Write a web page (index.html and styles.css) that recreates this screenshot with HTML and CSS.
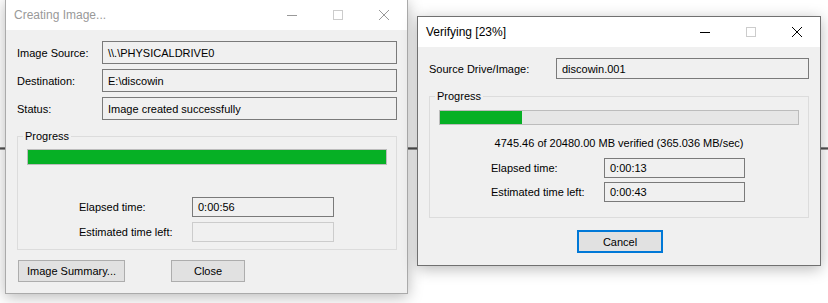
FILE: index.html
```html
<!DOCTYPE html>
<html>
	<head>
		<meta charset="UTF-8">
		<title>Creating Image</title>
		<link rel="stylesheet" href="styles.css">
	</head>
	<body>
		<!--创建镜像窗口(非活动)-->
		<div class="window inactive win-create">
			<div class="titlebar">
				<span class="title">Creating Image...</span>
				<div class="caption">
					<span class="cap"><svg width="10" height="10"><path d="M0 5.5h10"/></svg></span>
					<span class="cap cap-off"><svg width="10" height="10"><rect x="0.5" y="0.5" width="9" height="9"/></svg></span>
					<span class="cap"><svg width="10" height="10"><path d="M0 0L10 10M10 0L0 10"/></svg></span>
				</div>
			</div>
			<div class="client">
				<div class="fields fields-create">
					<label>Image Source:</label><div class="box">\\.\PHYSICALDRIVE0</div>
					<label>Destination:</label><div class="box">E:\discowin</div>
					<label>Status:</label><div class="box">Image created successfully</div>
				</div>
				<fieldset class="group group-create">
					<legend>Progress</legend>
					<div class="bar bar-create"><div class="bar-fill" style="width:100%"></div></div>
					<div class="times times-create">
						<label>Elapsed time:</label><div class="box">0:00:56</div>
						<label>Estimated time left:</label><div class="box box-off"></div>
					</div>
				</fieldset>
				<div class="buttons">
					<button class="btn btn-summary">Image Summary...</button>
					<button class="btn btn-close">Close</button>
				</div>
			</div>
		</div>

		<!--校验窗口(活动)-->
		<div class="window active win-verify">
			<div class="titlebar">
				<span class="title">Verifying [23%]</span>
				<div class="caption">
					<span class="cap"><svg width="10" height="10"><path d="M0 5.5h10"/></svg></span>
					<span class="cap cap-off"><svg width="10" height="10"><rect x="0.5" y="0.5" width="9" height="9"/></svg></span>
					<span class="cap"><svg width="10" height="10"><path d="M0 0L10 10M10 0L0 10"/></svg></span>
				</div>
			</div>
			<div class="client">
				<div class="fields fields-verify">
					<label>Source Drive/Image:</label><div class="box">discowin.001</div>
				</div>
				<fieldset class="group group-verify">
					<legend>Progress</legend>
					<div class="bar bar-verify"><div class="bar-fill" style="width:23%"></div></div>
					<div class="rate">4745.46 of 20480.00 MB verified (365.036 MB/sec)</div>
					<div class="times times-verify">
						<label>Elapsed time:</label><div class="box">0:00:13</div>
						<label>Estimated time left:</label><div class="box">0:00:43</div>
					</div>
				</fieldset>
				<div class="buttons buttons-center">
					<button class="btn btn-cancel">Cancel</button>
				</div>
			</div>
		</div>
	</body>
</html>
```
FILE: styles.css
```css
*{
	margin: 0;
	padding: 0;
	box-sizing: border-box;
}
html, body{
	width: 828px;
	height: 303px;
	overflow: hidden;
}
body{
	position: relative;
	font-family: "Liberation Sans", Arial, sans-serif;
	font-size: 11px;
	color: #000;
	/*背后桌面上的一条横线*/
	background: linear-gradient(transparent 147px, #8c8c8c 147px, #8c8c8c 148px, #505050 148px, #505050 149px, #9a9a9a 149px, #9a9a9a 150px, transparent 150px), #fff;
}

/*窗口*/
.window{
	position: absolute;
	background-color: #f0f0f0;
	box-shadow: 0 3px 14px rgba(0, 0, 0, 0.28);
	display: flex;
	flex-direction: column;
}
.inactive{
	border: 1px solid #aaaaaa;
}
.active{
	border: 1px solid #707070;
}
.win-create{
	left: 5px;
	top: -1px;
	width: 403px;
	height: 295px;
}
.win-verify{
	left: 417px;
	top: 16px;
	width: 404px;
	height: 250px;
}

/*标题栏*/
.titlebar{
	height: 30px;
	flex: none;
	background-color: #fff;
	display: flex;
	align-items: center;
}
.title{
	flex: 1;
	padding-left: 8px;
	font-size: 12px;
}
.inactive .title{
	color: #999;
}
.caption{
	display: flex;
	height: 30px;
}
.cap{
	width: 46px;
	height: 30px;
	display: flex;
	align-items: center;
	justify-content: center;
}
.cap svg{
	fill: none;
	stroke: #000;
	stroke-width: 1;
}
.inactive .cap svg{
	stroke: #999;
}
.cap-off svg, .inactive .cap-off svg{
	stroke: #cccccc;
}

/*内容区*/
.win-create .client{
	padding: 11px 10px 0 11px;
}
.win-verify .client{
	padding: 11px 11px 0 11px;
}
.fields{
	display: grid;
	align-items: center;
}
.fields-create{
	grid-template-columns: 85px 1fr;
	grid-auto-rows: 23px;
	row-gap: 5px;
}
.fields-verify{
	grid-template-columns: 127px 1fr;
	grid-auto-rows: 21px;
}
.box{
	height: 100%;
	border: 1px solid #7a7a7a;
	background-color: #f0f0f0;
	padding-left: 5px;
	display: flex;
	align-items: center;
	white-space: nowrap;
}
.box-off{
	border-color: #cccccc;
}

/*分组框*/
.group{
	border: 1px solid #dcdcdc;
	min-width: 0;
}
.group legend{
	margin-left: 5px;
	padding: 0 2px;
	line-height: 13px;
}
.group-create{
	margin-top: 10px;
	padding-bottom: 7px;
}
.group-verify{
	margin-top: 11px;
	padding-bottom: 15px;
}

/*进度条*/
.bar{
	margin: 0 9px;
	border: 1px solid #bcbcbc;
	background-color: #e6e6e6;
}
.bar-fill{
	height: 100%;
	background-color: #06b025;
}
.bar-create{
	margin-top: 6px;
	height: 16px;
}
.bar-verify{
	margin-top: 7px;
	height: 15px;
}
.rate{
	margin-top: 12px;
	line-height: 13px;
	text-align: center;
}

.times{
	display: grid;
	grid-template-columns: 113px 141px;
	grid-auto-rows: 20px;
	align-items: center;
	margin-left: 61px;
}
.times-create{
	margin-top: 32px;
	row-gap: 5px;
	grid-template-columns: 113px 142px;
}
.times-verify{
	margin-top: 8px;
	row-gap: 4px;
}

/*按钮*/
.buttons{
	display: flex;
	gap: 46px;
	margin-top: 10px;
	padding-left: 1px;
}
.buttons-center{
	justify-content: center;
	margin-top: 12px;
	padding-left: 2px;
}
.btn{
	font-family: inherit;
	font-size: 11px;
	color: #000;
	background-color: #e1e1e1;
	border: 1px solid #adadad;
	height: 22px;
}
.btn-summary{
	width: 107px;
}
.btn-close{
	width: 74px;
}
.btn-cancel{
	width: 86px;
	height: 23px;
	border: 2px solid #0078d7;
}
```
